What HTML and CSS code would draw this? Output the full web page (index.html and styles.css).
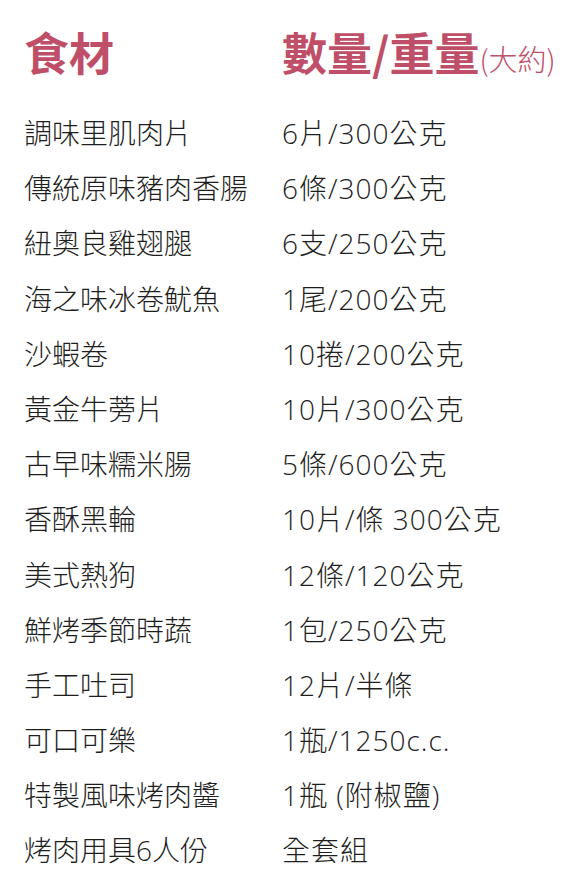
FILE: index.html
```html
<!DOCTYPE html>
<html lang="zh-Hant">
<head>
<meta charset="utf-8">
<title>食材</title>
<link rel="stylesheet" href="styles.css">
</head>
<body>
<div class="sheet">
  <div class="head">食材</div>
  <div class="head">數量/重量<span class="note">(大約)</span></div>

  <div class="cell">調味里肌肉片</div><div class="cell qty">6片/300公克</div>
  <div class="cell">傳統原味豬肉香腸</div><div class="cell qty">6條/300公克</div>
  <div class="cell">紐奧良雞翅腿</div><div class="cell qty">6支/250公克</div>
  <div class="cell">海之味冰卷魷魚</div><div class="cell qty">1尾/200公克</div>
  <div class="cell">沙蝦卷</div><div class="cell qty">10捲/200公克</div>
  <div class="cell">黃金牛蒡片</div><div class="cell qty">10片/300公克</div>
  <div class="cell">古早味糯米腸</div><div class="cell qty">5條/600公克</div>
  <div class="cell">香酥黑輪</div><div class="cell qty">10片/條 300公克</div>
  <div class="cell">美式熱狗</div><div class="cell qty">12條/120公克</div>
  <div class="cell">鮮烤季節時蔬</div><div class="cell qty">1包/250公克</div>
  <div class="cell">手工吐司</div><div class="cell qty">12片/半條</div>
  <div class="cell">可口可樂</div><div class="cell qty">1瓶/1250c.c.</div>
  <div class="cell">特製風味烤肉醬</div><div class="cell qty">1瓶 (附椒鹽)</div>
  <div class="cell">烤肉用具6人份</div><div class="cell qty">全套組</div>
</div>
</body>
</html>
```
FILE: styles.css
```css
html, body {
  margin: 0;
  padding: 0;
  background: #ffffff;
}

body {
  font-family: "Noto Sans CJK TC", "Noto Sans", sans-serif;
  color: #1e1e1e;
}

.sheet {
  display: grid;
  grid-template-columns: 258px 1fr;
  grid-auto-rows: 55.2px;
  grid-template-rows: 106px;
  padding-left: 24px;
}

.head {
  font-size: 45px;
  font-weight: 700;
  line-height: 104px;
  color: #bf4f69;
  white-space: nowrap;
}

.note {
  font-size: 29px;
  font-weight: 300;
}

.cell {
  font-family: "Open Sans", "Noto Sans CJK TC", sans-serif;
  font-size: 28px;
  font-weight: 300;
  line-height: 55.2px;
  white-space: nowrap;
}

.qty {
  letter-spacing: 1px;
}
```
